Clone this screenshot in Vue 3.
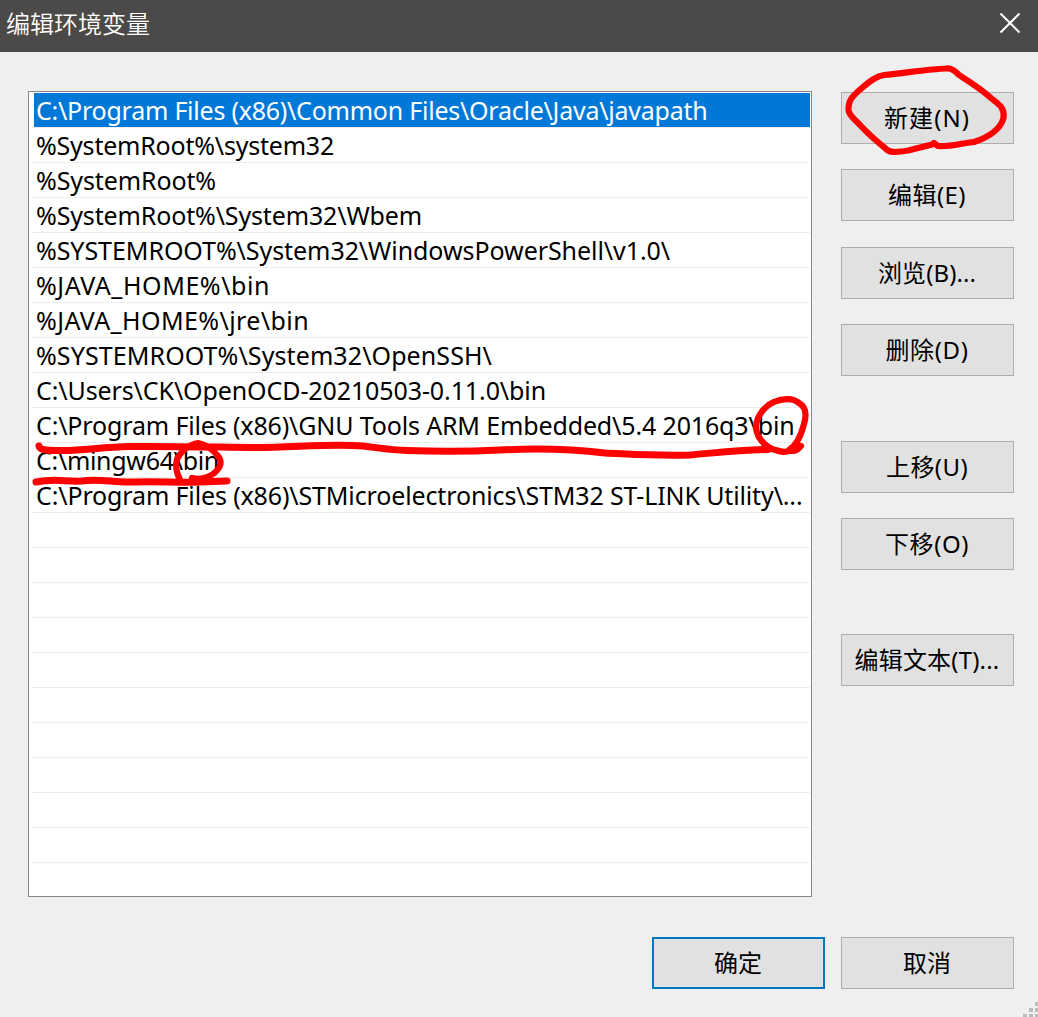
<script setup>
const paths = [
  { text: 'C:\\Program Files (x86)\\Common Files\\Oracle\\Java\\javapath', width: 671.5 },
  { text: '%SystemRoot%\\system32', width: 298 },
  { text: '%SystemRoot%', width: 180 },
  { text: '%SystemRoot%\\System32\\Wbem', width: 386 },
  { text: '%SYSTEMROOT%\\System32\\WindowsPowerShell\\v1.0\\', width: 634 },
  { text: '%JAVA_HOME%\\bin', width: 234 },
  { text: '%JAVA_HOME%\\jre\\bin', width: 273 },
  { text: '%SYSTEMROOT%\\System32\\OpenSSH\\', width: 456 },
  { text: 'C:\\Users\\CK\\OpenOCD-20210503-0.11.0\\bin', width: 510 },
  { text: 'C:\\Program Files (x86)\\GNU Tools ARM Embedded\\5.4 2016q3\\bin', width: 758.5 },
  { text: 'C:\\mingw64\\bin', width: 183 },
  { text: 'C:\\Program Files (x86)\\STMicroelectronics\\STM32 ST-LINK Utility\\...', width: 766.5 },
]
const rows = Array.from({ length: 22 }, (_, i) => paths[i] ?? null)

const groups = [
  [
    { text: '新建(N)', width: 86 },
    { text: '编辑(E)', width: 78 },
    { text: '浏览(B)...', width: 98 },
    { text: '删除(D)', width: 83 },
  ],
  [
    { text: '上移(U)', width: 82 },
    { text: '下移(O)', width: 84 },
  ],
  [{ text: '编辑文本(T)...', width: 145 }],
]

// Tracks the label so that it occupies the given width
const vTrack = {
  mounted(el, { value }) {
    const natural = el.getBoundingClientRect().width
    el.style.letterSpacing = `${(value - natural) / el.textContent.length}px`
  },
}
</script>

<template>
  <div class="dialog">
    <header class="titlebar">
      <h1>编辑环境变量</h1>
      <button class="close" aria-label="关闭">
        <svg width="22" height="22" viewBox="0 0 22 22"><path d="M1.5 1.5 20.5 20.5M20.5 1.5 1.5 20.5" /></svg>
      </button>
    </header>

    <main class="body">
      <ul class="list">
        <li v-for="(row, i) in rows" :key="i" :class="{ selected: i === 0 }">
          <span v-if="row" v-track="row.width">{{ row.text }}</span>
        </li>
      </ul>
      <div class="actions">
        <div v-for="(group, g) in groups" :key="g" class="group">
          <button v-for="item in group" :key="item.text" class="btn">
            <span v-track="item.width">{{ item.text }}</span>
          </button>
        </div>
      </div>
    </main>

    <footer class="footer">
      <button class="btn primary">确定</button>
      <button class="btn">取消</button>
    </footer>

    <svg class="grip" width="16" height="16" viewBox="0 0 16 16">
      <path d="M13 1h3v4h-3zM7 7h4v4H7zM13 7h3v4h-3zM1 13h4v3H1zM7 13h4v3H7zM13 13h3v3h-3z" />
    </svg>

    <svg class="marks" width="1038" height="1017" viewBox="0 0 1038 1017">
      <path class="thin" d="M946 68.500C930 69 905 73 884 75C876 76 869 82 863 87C854 95 848 99 848.500 110C849 116 855 119 860 125C870 136 880 144 888 150.500C892 153 900 152 908 150.500L932 144.500L934 143L938 146C950 147 962 143 974 142C986 138 1000 131 1003.500 118C1005 107 998 104 991 98C980 88 970 82 959 75C955 71 952 68 946 68.500Z" />
      <path d="M39 446C40 451 50 450.500 64 450.500C85 450 105 447 130 446.500C165 446 210 447 250 447.500C290 448 330 443 363 446C380 448 390 450 407 450.500C450 452 470 451.500 500 450C540 448 580 450 605 453C630 454 655 456 690 455C715 453 735 450 768 449.500" />
      <path class="thin" d="M772 449C761 443 756 435 756 426C757 415 766 405 774 402C783 398 793 398 799 403C806 407 807 414 804 424C801 436 796 446 788 451C782 454 775 449 764 447M788 451C796 451 798 450 801 446" />
      <path d="M36 482C55 478 65 482 82 481C100 478 114 483 134 482C158 481 180 483 201 482L227 481" />
      <path class="thin" d="M192 478C202 481 213 476 218 469C222 464 221 459 217 455C211 448 205 444 198 443C190 444 181 451 177 459C175 466 177 474 180 480" />
    </svg>
  </div>
</template>

<style>
body {
  margin: 0;
}
</style>

<style scoped>
.dialog {
  position: relative;
  box-sizing: border-box;
  width: 1038px;
  height: 1017px;
  overflow: hidden;
  background: #efefef;
  color: #000;
  font-family: "Noto Sans", "Noto Sans CJK SC", sans-serif;
  font-size: 24px;
  display: flex;
  flex-direction: column;
}
.titlebar {
  height: 52px;
  flex: none;
  background: #4c4a48;
  color: #fff;
  display: flex;
  justify-content: space-between;
  align-items: center;
  padding: 0 17px 0 6px;
  box-sizing: border-box;
}
h1 {
  margin: 0 0 6px;
  font-family: "Noto Sans CJK SC", sans-serif;
  font-size: 24px;
  font-weight: 350;
  line-height: 40px;
}
button {
  padding: 0;
  font: inherit;
  color: inherit;
}
.close {
  display: flex;
  border: 0;
  background: none;
  margin-bottom: 6px;
}
.close path {
  stroke: #fff;
  stroke-width: 2;
  fill: none;
}
.body {
  display: flex;
  gap: 29px;
  padding: 39px 0 0 28px;
}
.list {
  box-sizing: border-box;
  width: 784px;
  height: 806px;
  margin: 0;
  padding: 1px 1px 0 3px;
  border: 1px solid #828790;
  background: #fff;
  list-style: none;
  overflow: hidden;
}
li {
  box-sizing: border-box;
  height: 35px;
  padding-left: 4px;
  border-bottom: 1px solid #ededed;
  line-height: 35px;
  font-size: 25px;
  white-space: pre;
}
li.selected {
  margin-left: 2px;
  padding-left: 2px;
  background: #0078d7;
  background-clip: padding-box;
  color: #fff;
}
.actions {
  display: flex;
  flex-direction: column;
  gap: 64.350px;
  padding-top: 1px;
}
.group {
  display: flex;
  flex-direction: column;
  gap: 25.400px;
}
.btn {
  box-sizing: border-box;
  width: 173px;
  height: 52px;
  border: 1px solid #adadad;
  background: #e1e1e1;
  line-height: 50px;
  white-space: nowrap;
  padding-right: 1px;
}
.btn.primary {
  border: 2px solid #0078c0;
  line-height: 48px;
}
.footer {
  display: flex;
  justify-content: flex-end;
  gap: 16px;
  padding: 40px 24px 0 0;
}
.grip {
  position: absolute;
  right: 0;
  bottom: 0;
  fill: #bcbcbc;
}
.marks {
  position: absolute;
  left: 0;
  top: 0;
  pointer-events: none;
  fill: none;
  stroke: #fe0000;
  stroke-width: 7;
  stroke-linecap: round;
  stroke-linejoin: round;
}
.marks .thin {
  stroke-width: 6.2;
}
</style>
